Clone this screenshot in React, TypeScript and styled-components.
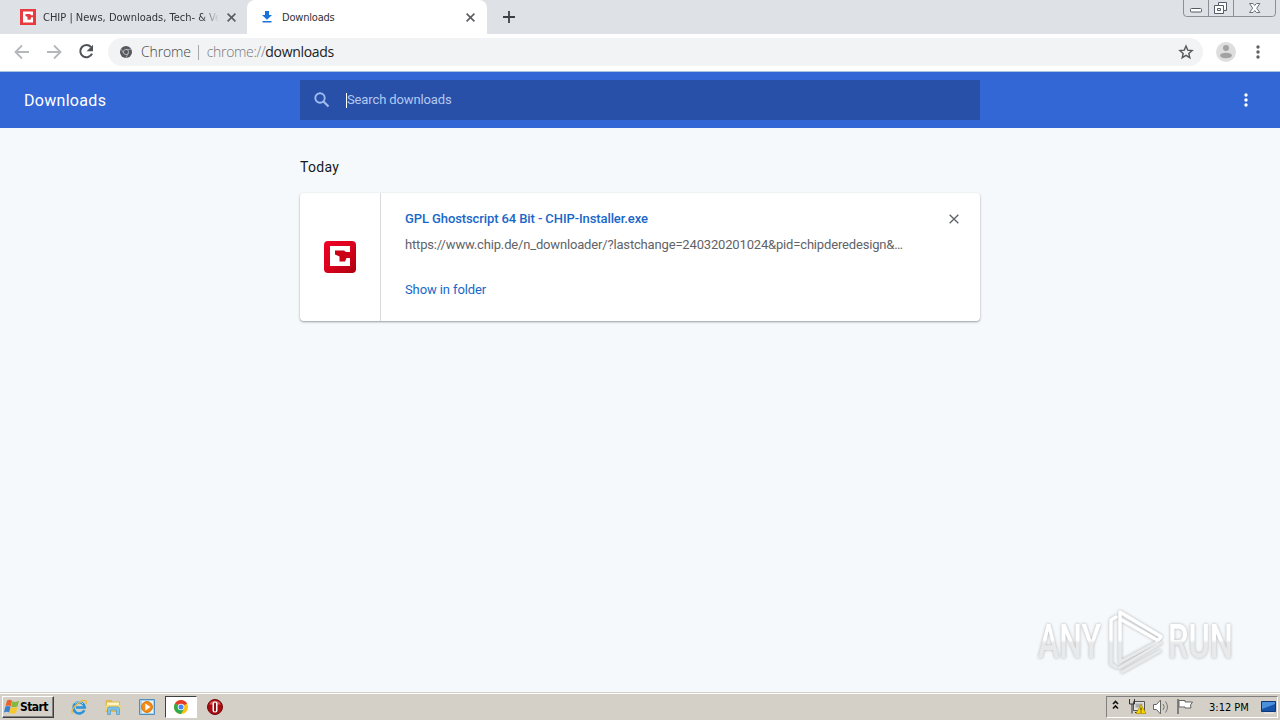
import React from 'react'

import styled, { createGlobalStyle } from 'styled-components'

const App: React.FC = () => (
  <>
    <GlobalStyle />
    <Desktop>
      <TabStrip>
        <Tab>
          <ChipFavicon />
          <TabTitle $fade>CHIP | News, Downloads, Tech- &amp; Ve</TabTitle>
          <CloseIcon size={9} color="#5a5d61" stroke={1.6} />
        </Tab>
        <Tab $active>
          <DownloadIcon />
          <TabTitle>Downloads</TabTitle>
          <CloseIcon size={9} color="#5a5d61" stroke={1.6} />
        </Tab>
        <NewTabButton>
          <svg width="12" height="12" viewBox="0 0 12 12">
            <path d="M6 0v12M0 6h12" stroke="#3c4043" strokeWidth="1.8" />
          </svg>
        </NewTabButton>
        <WindowControls />
      </TabStrip>
      <Toolbar>
        <NavButtons>
          <ArrowIcon />
          <ArrowIcon forward />
          <ReloadIcon />
        </NavButtons>
        <Omnibox>
          <ChromeMonoIcon />
          <SiteName>Chrome</SiteName>
          <Separator />
          <Url>
            chrome://<b>downloads</b>
          </Url>
          <StarIcon />
        </Omnibox>
        <ProfileIcon />
        <DotsIcon color="#5f6368" />
      </Toolbar>
      <PageHeader>
        <PageTitle>Downloads</PageTitle>
        <SearchBox>
          <SearchIcon />
          <Caret />
          <SearchHint>Search downloads</SearchHint>
        </SearchBox>
        <HeaderMenu>
          <DotsIcon color="#fff" />
        </HeaderMenu>
      </PageHeader>
      <Page>
        <DateLabel>Today</DateLabel>
        <Card>
          <CardIcon>
            <ChipLogo />
          </CardIcon>
          <CardBody>
            <FileName>GPL Ghostscript 64 Bit - CHIP-Installer.exe</FileName>
            <FileUrl>https://www.chip.de/n_downloader/?lastchange=240320201024&amp;pid=chipderedesign&amp;…</FileUrl>
            <FolderLink>Show in folder</FolderLink>
          </CardBody>
          <RemoveButton>
            <CloseIcon size={10} color="#5f6368" stroke={1.2} />
          </RemoveButton>
        </Card>
        <Watermark />
      </Page>
      <Taskbar>
        <StartButton>
          <WindowsLogo />
          <StartText>Start</StartText>
        </StartButton>
        <QuickLaunch>
          <TaskItem>
            <ExplorerIcon />
          </TaskItem>
          <TaskItem>
            <FolderIcon />
          </TaskItem>
          <TaskItem>
            <PlayerIcon />
          </TaskItem>
          <TaskItem $pressed>
            <ChromeIcon />
          </TaskItem>
          <TaskItem>
            <OperaIcon />
          </TaskItem>
        </QuickLaunch>
        <Tray>
          <TrayIcons />
          <Clock>3:12 PM</Clock>
          <MonitorIcon />
        </Tray>
      </Taskbar>
    </Desktop>
  </>
)

export default App

const CloseIcon: React.FC<{ size: number; color: string; stroke: number }> = ({ size, color, stroke }) => (
  <svg width={size} height={size} viewBox="0 0 9 9">
    <path d="M.6.6l7.8 7.8M8.4.6L.6 8.4" stroke={color} strokeWidth={stroke} />
  </svg>
)

const ChipFavicon: React.FC = () => (
  <svg width="16" height="16" viewBox="0 0 16 16">
    <path d="M0 0h16v16H0z" fill="#e83b40" />
    <path d="M3 2.500h10v11H3z" fill="#fff" />
    <path d="M5.500 5h4.500l1 1.200h2v2h-1.800l-.7 2.500H7.500V8L5.500 7z" fill="#e83b40" />
  </svg>
)

const DownloadIcon: React.FC = () => (
  <svg width="16" height="16" viewBox="0 0 16 16">
    <path d="M6 2h4v4h3L8 10.800 3 6h3zM3.500 12h9v1.500h-9z" fill="#1a73d8" />
  </svg>
)

const WindowControls: React.FC = () => (
  <WindowButtons>
    <svg width="94" height="18" viewBox="0 0 94 18" fill="none">
      <path d="M.5 0v13q0 3.500 3 3.500h86q3 0 3-3.500V0M25.500 0v16.500M50.500 0v16.500" stroke="#8b8f97" />
      <rect x="7.500" y="8.500" width="11" height="3.500" rx="1" fill="#fff" stroke="#555b66" />
      <path d="M35.500 2.500h8v8h-3v3h-9v-8h4z" fill="#fff" stroke="#555b66" />
      <path d="M35.500 5.500h5v5M34.500 8.500h3v2h-3z" stroke="#555b66" />
      <path
        d="M66.500 3.500h3.500l1.700 2 1.700-2h3.500l-3.200 4.700 3.200 4.300h-3.500l-1.700-2-1.700 2h-3.500l3.200-4.300z"
        fill="#fff"
        stroke="#6b707a"
      />
    </svg>
  </WindowButtons>
)

const ArrowIcon: React.FC<{ forward?: boolean }> = ({ forward }) => (
  <svg width="16" height="16" viewBox="0 0 16 16" fill="none">
    <path
      d={forward ? 'M1 8h13M8 1.500l6.500 6.500L8 14.500' : 'M15 8H2M8 1.500L1.500 8 8 14.500'}
      stroke="#b5b7ba"
      strokeWidth="1.800"
    />
  </svg>
)

const ReloadIcon: React.FC = () => (
  <svg width="16" height="16" viewBox="0 0 16 16">
    <path d="M13 3.200A6.100 6.100 0 1 0 14 9.600" fill="none" stroke="#4f5256" strokeWidth="2" />
    <path d="M15 .8v6.400H8.600z" fill="#4f5256" />
  </svg>
)

const ChromeMonoIcon: React.FC = () => (
  <svg width="12" height="12" viewBox="0 0 12 12" fill="none">
    <circle cx="6" cy="6" r="6" fill="#55585c" />
    <circle cx="6" cy="6" r="2.600" stroke="#c4c6c9" strokeWidth=".8" />
    <path d="M6 3.400h5.300M3.700 7.300L1.200 3.200M8.300 7.300L5.900 12" stroke="#c4c6c9" strokeWidth=".7" />
  </svg>
)

const StarIcon: React.FC = () => (
  <svg width="16" height="16" viewBox="0 0 16 16">
    <path
      d="M8 2l1.700 4.100 4.400.4-3.300 2.900 1 4.300L8 11.400l-3.800 2.300 1-4.300-3.300-2.900 4.400-.4z"
      fill="none"
      stroke="#55585c"
      strokeWidth="1.400"
    />
  </svg>
)

const ProfileIcon: React.FC = () => (
  <svg width="20" height="20" viewBox="0 0 20 20">
    <circle cx="10" cy="10" r="10" fill="#dedede" />
    <circle cx="10" cy="6" r="3" fill="#a2a2a2" />
    <ellipse cx="10" cy="13.500" rx="6" ry="2.800" fill="#a2a2a2" />
  </svg>
)

const DotsIcon: React.FC<{ color: string }> = ({ color }) => (
  <svg width="4" height="14" viewBox="0 0 4 14" fill={color}>
    <circle cx="2" cy="2" r="1.700" />
    <circle cx="2" cy="7" r="1.700" />
    <circle cx="2" cy="12" r="1.700" />
  </svg>
)

const SearchIcon: React.FC = () => (
  <svg width="16" height="16" viewBox="0 0 16 16" fill="none" stroke="#9fbcf2">
    <circle cx="6" cy="6" r="4.700" strokeWidth="1.900" />
    <path d="M9.500 9.500l5 5" strokeWidth="2.100" />
  </svg>
)

const ChipLogo: React.FC = () => (
  <svg width="32" height="32" viewBox="0 0 32 32">
    <defs>
      <linearGradient id="chip" x1="0" y1="0" x2="1" y2="1">
        <stop offset="0" stopColor="#f00028" />
        <stop offset=".5" stopColor="#d9001c" />
        <stop offset="1" stopColor="#ad0010" />
      </linearGradient>
    </defs>
    <rect width="32" height="32" rx="4" fill="url(#chip)" />
    <path d="M6 5h20v20H6z" fill="#fff" />
    <path d="M11 9.500h9l2 1.500h4.200v6H22.500l-1.500 3.500h-5.500V15.500L11 13.500z" fill="#cb0017" />
  </svg>
)

const Watermark: React.FC = () => (
  <WatermarkSvg viewBox="0 0 200 68">
    <defs>
      <linearGradient id="mark" x1="0" y1="0" x2="0" y2="68" gradientUnits="userSpaceOnUse">
        <stop offset=".5" stopColor="#fff" />
        <stop offset=".54" stopColor="#e8e9ea" />
      </linearGradient>
    </defs>
    <WatermarkText x="2" y="52" textLength="63" lengthAdjust="spacingAndGlyphs">
      ANY
    </WatermarkText>
    <WatermarkText x="132" y="52" textLength="65" lengthAdjust="spacingAndGlyphs">
      RUN
    </WatermarkText>
    <g fill="none" stroke="url(#mark)" strokeLinejoin="round" strokeLinecap="round">
      <path d="M84 54V6l41 24.500-3 4L86 14" strokeWidth="3.500" />
      <path d="M80 11l-5 3v44l5 3" strokeWidth="3.500" />
      <path d="M84 56l37-20M83 62l42-25M86 66l38-21" strokeWidth="3" />
    </g>
  </WatermarkSvg>
)

const WindowsLogo: React.FC = () => (
  <svg width="16" height="16" viewBox="0 0 16 16">
    <path d="M3 1.500q3-1.500 5 .3L6.800 7.300q-2.600-1.500-5.300 0z" fill="#e8642a" />
    <path d="M8.500 2.300q3 1.500 6.500-.5l-1.500 5.700q-3 1.500-6.400 0z" fill="#83b93c" />
    <path d="M1.300 7.700q2.700-1.500 5.300 0L5.200 13.500q-2.500-1.500-5.200 0z" fill="#3a80cf" />
    <path d="M6.900 7.900q3.200 1.500 6.500 0L12 14q-3.200 1.500-6.500 0z" fill="#f6c82c" />
  </svg>
)

const ExplorerIcon: React.FC = () => (
  <svg width="16" height="16" viewBox="0 0 16 16" fill="none">
    <path d="M13.300 11.200A5.600 5.600 0 1 1 13.800 8.500H5" stroke="#2b93dc" strokeWidth="2.600" />
    <path d="M12 5A5 5 0 0 0 4 4.600" stroke="#9ad8fa" />
    <path d="M1.500 14.500C-1.500 10 11-1 15 2c.8 1 .3 2-.4 3" stroke="#e9b93d" strokeWidth="1.300" />
  </svg>
)

const FolderIcon: React.FC = () => (
  <svg width="16" height="16" viewBox="0 0 16 16">
    <path d="M.5 2.500L1.500 1h5l1 1.500h7.500V13H.5z" fill="#dfb94f" />
    <path d="M2 3.500h12v6H2z" fill="#fff6c8" />
    <path d="M.5 6h15v5.500H.5z" fill="#f1d673" />
    <path
      d="M2.500 15.500V10q0-2 2-2h8q2 0 2 2v5.500h-3V11h-6v4.500z"
      fill="#7cc2ea"
      stroke="#4293c8"
      strokeWidth=".6"
    />
  </svg>
)

const PlayerIcon: React.FC = () => (
  <svg width="16" height="16" viewBox="0 0 16 16">
    <path d="M.5.5h15v15H.5z" fill="#a8d1ec" stroke="#4f8ebd" />
    <path d="M3 2h11v12H3z" fill="#e9f5fc" />
    <circle cx="8" cy="8" r="5.400" fill="#f28b17" stroke="#d87300" />
    <path d="M6.300 4.500L11.500 8l-5.200 3.500z" fill="#fff" />
  </svg>
)

const ChromeIcon: React.FC = () => (
  <svg width="14" height="14" viewBox="0 0 14 14">
    <circle cx="7" cy="7" r="7" fill="#fbc116" />
    <path d="M7 7L.94 3.500A7 7 0 0 1 13.060 3.500z" fill="#e33b2e" />
    <path d="M7 7L.94 3.500A7 7 0 0 0 7 14l3-5.200z" fill="#2da94f" />
    <circle cx="7" cy="7" r="3.300" fill="#fff" />
    <circle cx="7" cy="7" r="2.500" fill="#4285f4" />
  </svg>
)

const OperaIcon: React.FC = () => (
  <svg width="16" height="16" viewBox="0 0 16 16">
    <circle cx="8" cy="8" r="7.500" fill="#a90d12" stroke="#70070a" />
    <path d="M2.300 5.500a6.200 6.200 0 0 1 11.400 0z" fill="#d95a5a" />
    <rect x="5.500" y="2.500" width="5" height="11" rx="2.500" fill="#fff" />
    <rect x="7" y="3.500" width="2" height="9" rx="1" fill="#8e1013" />
  </svg>
)

const TrayIcons: React.FC = () => (
  <svg width="84" height="18" viewBox="0 0 84 18" fill="none">
    <path d="M3 6l2.500-2.500L8 6M3 10.500L5.500 8 8 10.500" stroke="#111" strokeWidth="1.600" />
    <path d="M23.500 3.500h11v9h-11z" fill="#e2e2e2" stroke="#555" />
    <path d="M25.500 5.500h7v4h-7z" fill="#aaa" />
    <path d="M19.500 1v5h5V1M22 6v9.500M25 14.500h7" stroke="#333" />
    <path d="M31 6.500l5 9H26z" fill="#f7d400" stroke="#a98a00" strokeWidth=".7" />
    <path d="M31 9.500v3M31 13.500v1" stroke="#222" />
    <path d="M43.500 6.500h3L50.500 2v14l-4-4.500h-3z" fill="#fff" stroke="#666" />
    <path d="M53 6q2.500 3 0 6M55.500 3.500q4 5.500 0 11" stroke="#777" />
    <path d="M68 1v15" stroke="#666" strokeWidth="1.500" />
    <path d="M69 2.500h6v1.500h7.500l-2 3 .5 3H75v-1h-6z" fill="#fff" stroke="#666" />
  </svg>
)

const MonitorIcon: React.FC = () => (
  <svg width="16" height="14" viewBox="0 0 16 14">
    <path d="M.5 1.500h14v10H.5z" fill="#1754a9" stroke="#0b3778" />
    <path d="M1 2h13v2L1 9z" fill="#4a90dc" />
    <path d="M3 13h10" stroke="#eee" />
  </svg>
)

const GlobalStyle = createGlobalStyle`
  body {
    margin: 0;
    overflow: hidden;
  }
  svg {
    display: block;
    flex: none;
  }
`
const Desktop = styled.div`
  display: flex;
  flex-direction: column;
  width: 1280px;
  height: 720px;
  font-family: Roboto, sans-serif;
  background: #f5f9fc;
`
const TabStrip = styled.div`
  display: flex;
  height: 34px;
  background: #dee1e6;
`
const Tab = styled.div<{ $active?: boolean }>`
  display: flex;
  align-items: center;
  box-sizing: border-box;
  width: ${(props) => (props.$active ? 240 : 247)}px;
  padding: ${(props) => (props.$active ? '0 12px' : '0 11px 0 20px')};
  border-radius: 8px 8px 0 0;
  background: ${(props) => (props.$active ? '#fff' : 'transparent')};
`
const TabTitle = styled.span<{ $fade?: boolean }>`
  flex: 1;
  min-width: 0;
  margin: 0 8px 0 7px;
  overflow: hidden;
  font: 11px 'DejaVu Sans Condensed', 'DejaVu Sans', sans-serif;
  font-stretch: condensed;
  letter-spacing: ${(props) => (props.$fade ? '0' : '-0.2px')};
  white-space: nowrap;
  color: #303338;
  mask-image: ${(props) => props.$fade && 'linear-gradient(to right, #000 90%, transparent)'};
`
const NewTabButton = styled.div`
  display: flex;
  align-items: center;
  margin-left: 16px;
`
const WindowButtons = styled.div`
  margin: 0 3px 0 auto;
`
const Toolbar = styled.div`
  display: flex;
  align-items: center;
  box-sizing: border-box;
  height: 38px;
  padding: 0 20px 1px 14px;
  border-bottom: 1px solid #a9c4df;
  background: #fff;
`
const NavButtons = styled.div`
  display: flex;
  gap: 16px;
  margin-right: 14px;
`
const Omnibox = styled.div`
  display: flex;
  align-items: center;
  box-sizing: border-box;
  width: 1095px;
  height: 28px;
  margin-right: 13px;
  padding: 0 9px 0 12px;
  border-radius: 14px;
  font: 14px/18px 'Open Sans', sans-serif;
  font-weight: 300;
  background: #f1f3f4;

  & + svg {
    margin-right: 20px;
  }
  > svg:last-child {
    margin-left: auto;
  }
`
const SiteName = styled.span`
  margin-left: 9px;
  letter-spacing: -0.15px;
  color: #44474b;
`
const Separator = styled.div`
  width: 1px;
  height: 15px;
  margin: 0 8px 0 7px;
  background: #a5a8ac;
`
const Url = styled.span`
  letter-spacing: -0.33px;
  color: #75787c;

  b {
    font-weight: 400;
    color: #202124;
  }
`
const PageHeader = styled.div`
  display: grid;
  grid-template-columns: 300px 680px 300px;
  align-items: center;
  height: 56px;
  background: #3367d6;
`
const PageTitle = styled.div`
  padding-left: 24px;
  font-size: 16px;
  letter-spacing: 0.3px;
  color: #fff;
`
const SearchBox = styled.div`
  display: flex;
  align-items: center;
  height: 40px;
  padding-left: 14px;
  background: #2950a8;
`
const Caret = styled.div`
  width: 1px;
  height: 15px;
  margin-left: 16px;
  background: #fff;
`
const SearchHint = styled.span`
  padding-bottom: 2px;
  font-size: 13px;
  letter-spacing: -0.12px;
  color: #b3c8f2;
`
const HeaderMenu = styled.div`
  display: flex;
  justify-content: flex-end;
  padding-right: 32px;
`
const Page = styled.div`
  display: flex;
  flex: 1;
  flex-direction: column;
  padding: 0 300px;
`
const DateLabel = styled.div`
  padding: 30px 0 17px;
  font-size: 14px;
  line-height: 18px;
  letter-spacing: 0.3px;
  color: #17191c;
`
const Card = styled.div`
  display: flex;
  height: 128px;
  border-radius: 4px;
  background: #fff;
  box-shadow: 0 1px 2px rgba(60, 64, 67, 0.4), 0 1px 3px rgba(60, 64, 67, 0.12);
`
const CardIcon = styled.div`
  display: flex;
  align-items: center;
  justify-content: center;
  width: 80px;
  border-right: 1px solid #d8dadd;
`
const CardBody = styled.div`
  display: flex;
  flex-direction: column;
  flex: 1;
  padding: 16px 0 0 24px;
  font-size: 13px;
  line-height: 20px;
  white-space: nowrap;
`
const FileName = styled.div`
  font-weight: 500;
  letter-spacing: -0.1px;
  color: #1967c8;
`
const FileUrl = styled.div`
  margin-top: 6px;
  letter-spacing: -0.165px;
  color: #5f6368;
`
const FolderLink = styled.div`
  margin-top: 25px;
  letter-spacing: -0.1px;
  color: #1967c8;
`
const RemoveButton = styled.div`
  padding: 21px 21px 0 0;
`
const WatermarkSvg = styled.svg`
  align-self: flex-end;
  width: 200px;
  height: 68px;
  margin: auto -256px 18px 0;
  overflow: visible;
  filter: drop-shadow(0 0 1.5px rgba(90, 90, 90, 0.45));
`
const WatermarkText = styled.text`
  font: 500 49px Roboto, sans-serif;
  fill: url(#mark);
`
const Taskbar = styled.div`
  display: flex;
  align-items: center;
  box-sizing: border-box;
  height: 28px;
  padding: 1px 2px 0;
  border-top: 1px solid #d4d0c8;
  background: #d4d0c8;
  box-shadow: inset 0 1px #fff;
`
const StartButton = styled.div`
  display: flex;
  align-items: center;
  box-sizing: border-box;
  width: 52px;
  height: 22px;
  padding-left: 1px;
  border: 1px solid;
  border-color: #fff #404040 #404040 #fff;
  box-shadow: inset -1px -1px #808080;
`
const StartText = styled.span`
  font: bold 12px 'DejaVu Sans Condensed', 'DejaVu Sans', sans-serif;
  font-stretch: condensed;
  letter-spacing: -0.6px;
  color: #000;
`
const QuickLaunch = styled.div`
  display: flex;
  gap: 2px;
  margin-left: 9px;
`
const TaskItem = styled.div<{ $pressed?: boolean }>`
  display: flex;
  align-items: center;
  justify-content: center;
  box-sizing: border-box;
  width: 32px;
  height: 22px;
  border: 1px solid;
  border-color: ${(props) => (props.$pressed ? '#404040 #fff #fff #404040' : 'transparent')};
  background: ${(props) => props.$pressed && '#fff'};
`
const Tray = styled.div`
  display: flex;
  align-items: center;
  box-sizing: border-box;
  width: 172px;
  height: 22px;
  margin-left: auto;
  padding-left: 3px;
  border: 1px solid;
  border-color: #808080 #fff #fff #808080;
`
const Clock = styled.span`
  flex: 1;
  padding-left: 15px;
  font: 11px 'DejaVu Sans Condensed', 'DejaVu Sans', sans-serif;
  font-stretch: condensed;
  white-space: nowrap;
  color: #000;
`
